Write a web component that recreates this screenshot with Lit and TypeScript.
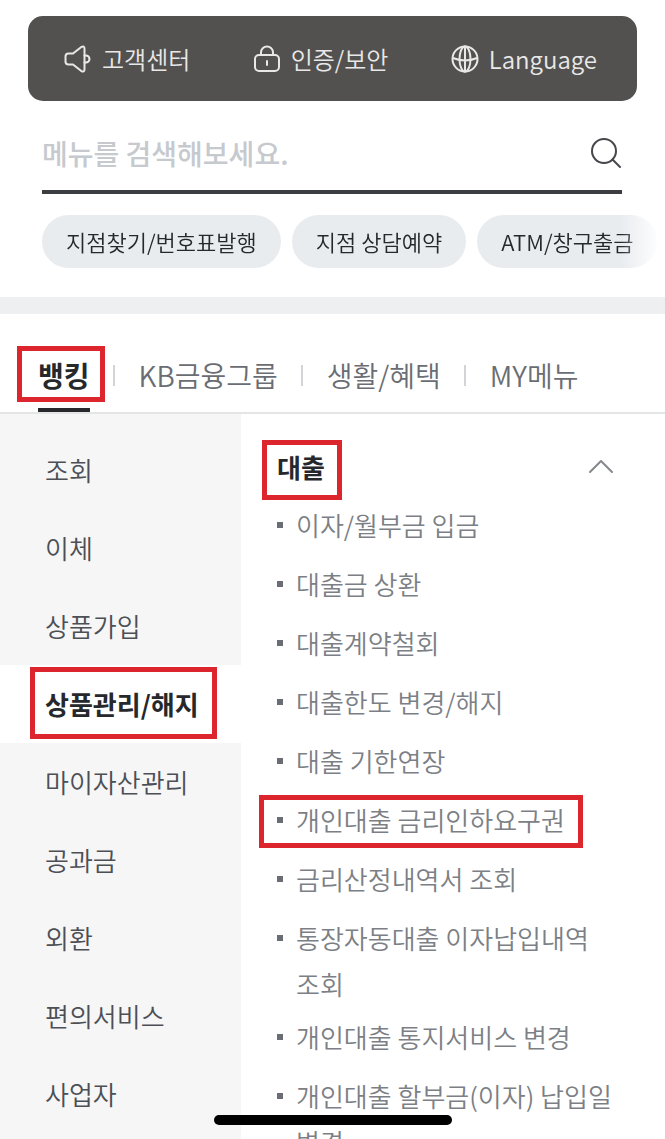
import { LitElement, html, css, svg } from "lit";
import { customElement, state } from "lit/decorators.js";
import { classMap } from "lit/directives/class-map.js";

const megaphone = svg`<path d="M9 8.500H4.500a3 3 0 0 0-3 3v5a3 3 0 0 0 3 3H9l8 6.300q3.500 2 3.500-1.500v-20.600q0-3.500-3.500-1.500z"/><path d="M20.500 10.500h1.500a3.500 3.500 0 0 1 0 7h-1.500"/>`;
const lock = svg`<rect x="2" y="10" width="24" height="16" rx="4"/><path d="M8 10V7.500a6 6 0 0 1 12 0V10M14 16v4"/>`;
const globe = svg`<circle cx="14" cy="14" r="12.500"/><ellipse cx="14" cy="14" rx="5.500" ry="12.500"/><path d="M14 1.500v25M2 13q12 5 24 0"/>`;

@customElement("app-root")
export class AppRoot extends LitElement {
  @state() private tab = "뱅킹";
  @state() private section = "상품관리/해지";
  @state() private open = true;

  private utilities = [
    { label: "고객센터", icon: megaphone },
    { label: "인증/보안", icon: lock },
    { label: "Language", icon: globe },
  ];
  private shortcuts = ["지점찾기/번호표발행", "지점 상담예약", "ATM/창구출금"];
  private tabs = ["뱅킹", "KB금융그룹", "생활/혜택", "MY메뉴"];
  private sections = ["조회", "이체", "상품가입", "상품관리/해지", "마이자산관리", "공과금", "외환", "편의서비스", "사업자"];
  private links = [
    "이자/월부금 입금",
    "대출금 상환",
    "대출계약철회",
    "대출한도 변경/해지",
    "대출 기한연장",
    "개인대출 금리인하요구권",
    "금리산정내역서 조회",
    "통장자동대출 이자납입내역 조회",
    "개인대출 통지서비스 변경",
    "개인대출 할부금(이자) 납입일 변경",
  ];

  static styles = css`
    :host {
      display: flex;
      flex-direction: column;
      height: 100vh;
      overflow: hidden;
      background: #fff;
      color: #26282c;
      font-family: "Noto Sans CJK KR", sans-serif;
      font-weight: 350;
      word-break: keep-all;
    }
    * { box-sizing: border-box; }
    button, input {
      font: inherit;
      color: inherit;
      background: none;
      border: 0;
      padding: 0;
      margin: 0;
    }
    button { cursor: pointer; }
    a { color: inherit; text-decoration: none; }
    ul { list-style: none; margin: 0; padding: 0; }
    svg { display: block; fill: none; stroke: currentColor; stroke-width: 2; stroke-linecap: round; stroke-linejoin: round; flex: none; }

    .utilities {
      display: flex;
      justify-content: space-between;
      align-items: center;
      flex: none;
      height: 85px;
      margin: 16px 28px 0;
      padding: 0 40px 0 36px;
      border-radius: 15px;
      background: #53514f;
      color: #e8e8e8;
      font-size: 24px;
      line-height: 36px;
    }
    .utility { display: flex; align-items: center; gap: 10px; }

    .search {
      display: flex;
      align-items: center;
      flex: none;
      height: 93px;
      margin: 0 43px 0 42px;
      padding-top: 14px;
      border-bottom: 4px solid #3b3d40;
    }
    .search-input { flex: 1; min-width: 0; font-size: 28px; line-height: 40px; font-weight: 500; outline: 0; }
    .search-input::placeholder { color: #c6c9ce; opacity: 1; }
    .search-button { color: #45474b; }

    .shortcuts {
      display: flex;
      flex: none;
      gap: 11px;
      margin-top: 21px;
      padding-left: 42px;
      overflow: hidden;
      -webkit-mask-image: linear-gradient(to left, transparent 4px, #000 44px);
      mask-image: linear-gradient(to left, transparent 4px, #000 44px);
    }
    .shortcut {
      flex: none;
      height: 53px;
      padding: 0 24px;
      border-radius: 27px;
      background: #e9ecef;
      font-size: 22px;
      line-height: 53px;
    }
    .band { flex: none; height: 17px; margin-top: 29px; background: #eeeff1; }

    .tabs {
      display: flex;
      flex: none;
      height: 100px;
      padding: 0 38px;
      border-bottom: 2px solid #e4e5e7;
      color: #6a6d73;
      font-size: 28px;
    }
    .tab { position: relative; height: 98px; padding-top: 24px; white-space: nowrap; }
    .tab + .tab { margin-left: 49px; }
    .tab + .tab::before {
      content: "";
      position: absolute;
      left: -26px;
      top: 51px;
      width: 2px;
      height: 21px;
      background: #d3d4d7;
    }
    .tab.selected { border-bottom: 4px solid #26282c; padding-top: 28px; color: #26282c; font-weight: 700; }

    .panes { display: flex; flex: 1; min-height: 0; font-size: 26px; }
    .sections { flex: none; width: 241px; padding-top: 17px; background: #f6f6f7; overflow: hidden; }
    .section {
      display: block;
      width: 100%;
      height: 78px;
      padding: 0 0 2px 45px;
      text-align: left;
      white-space: nowrap;
      color: #4c4f55;
    }
    .section.selected { background: #fff; color: #26282c; font-weight: 700; }

    .content { flex: 1; min-width: 0; padding: 24px 43px 0 36px; overflow: hidden; }
    .group { display: flex; justify-content: space-between; align-items: center; width: 100%; height: 56px; font-weight: 700; }
    .chevron { color: #85888e; margin-right: 8px; }
    .links { padding-top: 8px; color: #7c7f85; }
    .link-item { display: flex; align-items: flex-start; gap: 13px; min-height: 52px; margin-bottom: 7px; line-height: 46px; }
    .link-item::before { content: ""; flex: none; width: 6px; height: 6px; margin-top: 20px; background: #6a6d73; }

    .marked { position: relative; }
    .marked::after { content: ""; position: absolute; border: 5px solid #dc252c; pointer-events: none; }
    .tab.marked::after { inset: 32px -15px 6px -21px; }
    .mark-text { position: relative; display: inline-block; }
    .section .marked::after { inset: -18px -18px -17px -15px; }
    .group .marked::after { inset: -8px -17px -15px -15px; }
    .link-item .marked::after { inset: -2px -18px -5px -37px; }

    .home { position: fixed; left: 0; right: 0; bottom: 14px; display: flex; justify-content: center; pointer-events: none; }
    .home-bar { width: 238px; height: 10px; border-radius: 5px; background: #000; }
  `;

  render() {
    return html`
      <nav class="utilities">
        ${this.utilities.map(
          (u) => html`<button class="utility"><svg width="28" height="28" viewBox="0 0 28 28">${u.icon}</svg>${u.label}</button>`
        )}
      </nav>
      <form class="search" role="search" @submit=${(e: Event) => e.preventDefault()}>
        <input class="search-input" type="text" aria-label="메뉴 검색" placeholder="메뉴를 검색해보세요." />
        <button class="search-button" type="submit" aria-label="검색">
          <svg width="32" height="32" viewBox="0 0 32 32"><circle cx="14" cy="14" r="12"/><path d="M22.500 22.500l7.500 7.500"/></svg>
        </button>
      </form>
      <div class="shortcuts">${this.shortcuts.map((s) => html`<a class="shortcut" href="#">${s}</a>`)}</div>
      <div class="band"></div>
      <nav class="tabs">
        ${this.tabs.map(
          (t) => html`<button
            class=${classMap({ tab: true, selected: t === this.tab, marked: t === "뱅킹" })}
            @click=${() => (this.tab = t)}
          >${t}</button>`
        )}
      </nav>
      <main class="panes">
        <nav class="sections">
          ${this.sections.map(
            (s) => html`<button
              class=${classMap({ section: true, selected: s === this.section })}
              @click=${() => (this.section = s)}
            ><span class=${classMap({ "mark-text": true, marked: s === "상품관리/해지" })}>${s}</span></button>`
          )}
        </nav>
        <section class="content">
          <button class="group" aria-expanded=${this.open} @click=${() => (this.open = !this.open)}>
            <span class="mark-text marked">대출</span>
            <svg class="chevron" width="26" height="16" viewBox="0 0 26 16"><path d="M2 14L13 3l11 11"/></svg>
          </button>
          ${this.open
            ? html`<ul class="links">
                ${this.links.map(
                  (l) => html`<li class="link-item">
                    <a href="#" class=${classMap({ marked: l === "개인대출 금리인하요구권" })}>${l}</a>
                  </li>`
                )}
              </ul>`
            : null}
        </section>
      </main>
      <div class="home"><div class="home-bar"></div></div>
    `;
  }
}
